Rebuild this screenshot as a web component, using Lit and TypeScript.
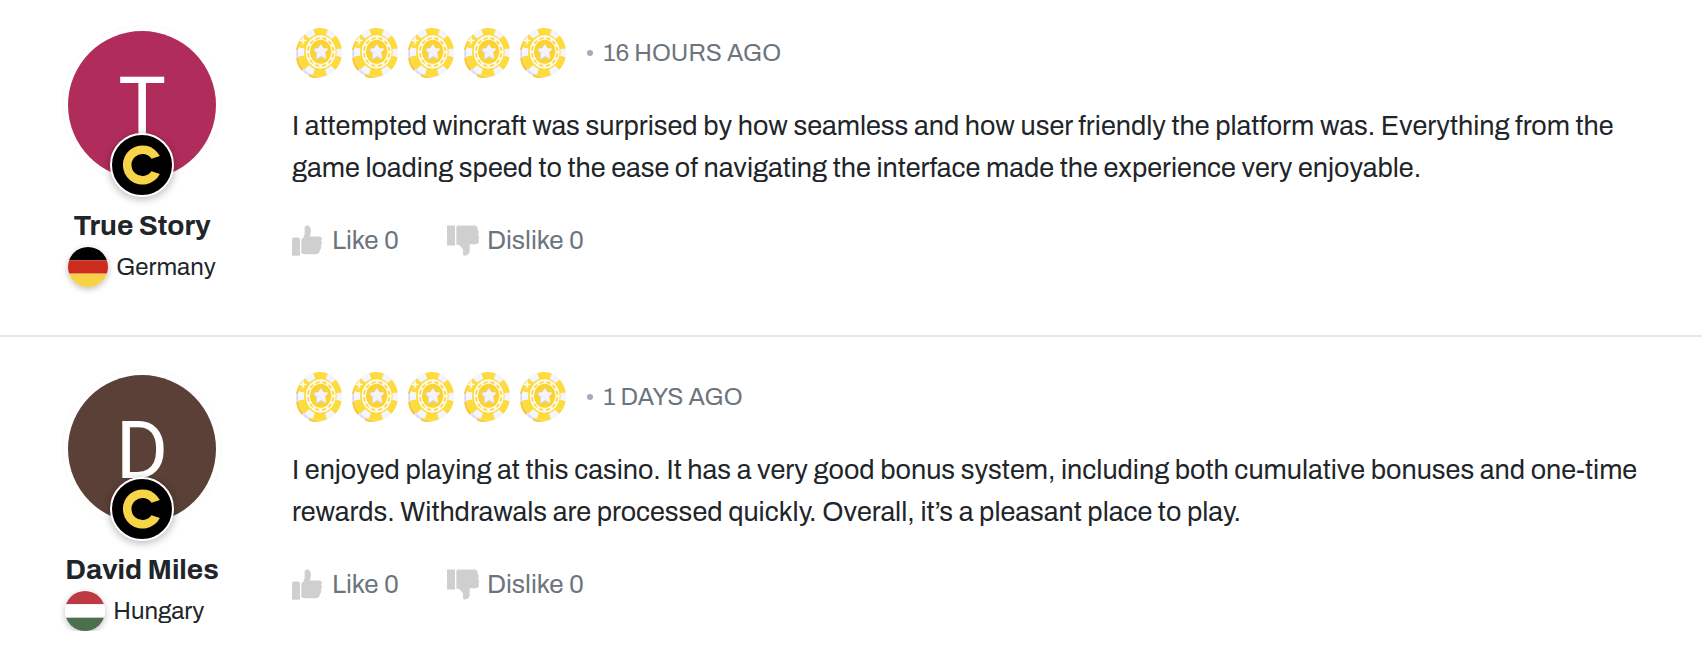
import { LitElement, html, svg, css } from "lit";
import { customElement, property } from "lit/decorators.js";

interface Review {
  name: string;
  country: "Germany" | "Hungary";
  tone: "rose" | "brown";
  rating: number;
  age: string;
  text: string;
  likes: number;
  dislikes: number;
}

const REVIEWS: Review[] = [
  {
    name: "True Story",
    country: "Germany",
    tone: "rose",
    rating: 5,
    age: "16 hours ago",
    text: "I attempted wincraft was surprised by how seamless and how user friendly the platform was. Everything from the game loading speed to the ease of navigating the interface made the experience very enjoyable.",
    likes: 0,
    dislikes: 0,
  },
  {
    name: "David Miles",
    country: "Hungary",
    tone: "brown",
    rating: 5,
    age: "1 days ago",
    text: "I enjoyed playing at this casino. It has a very good bonus system, including both cumulative bonuses and one-time rewards. Withdrawals are processed quickly. Overall, it’s a pleasant place to play.",
    likes: 0,
    dislikes: 0,
  },
];

const FLAGS = {
  Germany: ["#000000", "#cc2b1d", "#f8d147"],
  Hungary: ["#be3a42", "#ffffff", "#4e6e50"],
};

const chip = html`<svg class="chip" viewBox="0 0 138 150" aria-hidden="true">
  <ellipse cx="66" cy="77" rx="66" ry="72" fill="#dcdcfa" />
  <ellipse cx="60" cy="79" rx="51" ry="61" fill="none" stroke="#fbcb3a" stroke-width="20"
    pathLength="12" stroke-dasharray="1.2 0.8" stroke-dashoffset="-0.4" />
  <ellipse cx="72" cy="73" rx="66" ry="73" fill="#f5f5ff" />
  <ellipse cx="72" cy="73" rx="54" ry="61" fill="none" stroke="#fcdc3f" stroke-width="24"
    pathLength="12" stroke-dasharray="1.2 0.8" stroke-dashoffset="-0.4" />
  <ellipse cx="73" cy="72" rx="49" ry="54" fill="#fcd93e" />
  <ellipse cx="74" cy="72" rx="45" ry="50" fill="#fffbe8" />
  <ellipse cx="74" cy="72" rx="38" ry="42" fill="none" stroke="#fbd43c" stroke-width="5"
    pathLength="24" stroke-dasharray="1.2 0.8" stroke-dashoffset="-0.4" />
  <ellipse cx="74" cy="71" rx="32" ry="36" fill="#fcd334" />
  <path d="M72 52l6 12 15-1-9 13 4 16-14-7-13 9 2-17-11-12 14-2z" fill="#d9d9f7" stroke="#d9d9f7" stroke-width="3" stroke-linejoin="round" />
  <path d="M75 50l6 12 14 1-9 11 3 15-13-7-12 8 1-15-9-11 13-3z" fill="#f3f3ff" stroke="#f3f3ff" stroke-width="3" stroke-linejoin="round" />
  <path d="M21 23l3 11 10 3-10 4-3 11-4-11-9-4 9-3z" fill="#fffbe0" />
</svg>`;

const thumbUp = html`<svg class="thumb" viewBox="0 0 96 92" aria-hidden="true">
  <rect x="0" y="37" width="24" height="55" rx="5" />
  <path d="M28 43C34 38 38 31 38 24V8C38 1 45 -1 50 2C57 7 58 17 55 27L53 34H82C90 34 91 43 87 48C91 52 90 59 86 62C89 67 87 73 83 75C84 82 80 87 73 87H36C32 87 28 84 28 81Z" />
</svg>`;

const thumbDown = html`<svg class="thumb" viewBox="0 0 96 92" aria-hidden="true">
  <rect x="0" y="1" width="24" height="60" />
  <path d="M28 7C28 3 31 1 35 1H82C90 1 94 7 91 13C96 17 96 24 93 28C97 33 97 39 94 43C98 50 94 57 87 57H68V77C68 86 61 92 52 91C49 91 48 89 48 85V75C48 69 40 66 36 59H28Z" />
</svg>`;

@customElement("review-item")
class ReviewItem extends LitElement {
  @property({ attribute: false }) review!: Review;

  static styles = css`
    :host {
      display: grid;
      grid-template-columns: 160px minmax(0, 1fr);
      column-gap: 70px;
      padding: 0 40px 0 62px;
      color: #212529;
    }
    .author {
      display: flex;
      flex-direction: column;
      align-items: center;
    }
    .avatar {
      position: relative;
      box-sizing: border-box;
      width: 160px;
      height: 160px;
      padding: 5px;
      border: 1px solid #fafafa;
      border-radius: 50%;
    }
    .initial {
      display: flex;
      align-items: center;
      justify-content: center;
      box-sizing: border-box;
      height: 100%;
      padding-top: 4px;
      border-radius: 50%;
      color: #fff;
      font: 400 80px/1 Roboto, sans-serif;
    }
    .rose { background: #b02d5b; }
    .brown { background: #5a4037; }
    .badge {
      position: absolute;
      left: 47px;
      bottom: -13px;
      box-sizing: border-box;
      width: 64px;
      height: 64px;
      border: 2px solid #fff;
      border-radius: 50%;
      background: #000;
      box-shadow: 0 2px 8px rgba(0, 0, 0, 0.3);
    }
    .badge svg { display: block; width: 100%; height: 100%; }
    .identity { margin-top: 23px; }
    .name {
      margin: 0;
      font-size: 28px;
      font-weight: 700;
      line-height: 36px;
      text-align: center;
      white-space: nowrap;
    }
    .country {
      display: flex;
      align-items: center;
      gap: 8px;
      margin: 3px 0 0;
      font-size: 24px;
      line-height: 40px;
    }
    .flag {
      width: 40px;
      height: 40px;
      border-radius: 50%;
      box-shadow: 0 2px 6px rgba(0, 0, 0, 0.25);
    }
    .meta {
      display: flex;
      align-items: center;
      gap: 10px;
      padding: 3px 4px 0;
    }
    .chip { display: block; width: 46px; height: 50px; }
    .age {
      display: flex;
      align-items: center;
      gap: 10px;
      margin-left: 11px;
      color: #6c757d;
      font-size: 24px;
      line-height: 36px;
      text-transform: uppercase;
    }
    .dot {
      width: 6px;
      height: 6px;
      border-radius: 50%;
      background: #a2adb7;
    }
    .text {
      margin: 27px 0 0;
      font-size: 27px;
      line-height: 42px;
    }
    .votes {
      display: flex;
      gap: 48px;
      margin-top: 33px;
    }
    .vote {
      display: flex;
      align-items: center;
      gap: 8px;
      padding: 0;
      border: 0;
      background: none;
      color: #6c757d;
      font: inherit;
      font-size: 26px;
      line-height: 36px;
      cursor: pointer;
    }
    .thumb { width: 32px; height: 31px; fill: #cfcfcf; }
  `;

  render() {
    const r = this.review;
    return html`
      <div class="author">
        <div class="avatar">
          <div class="initial ${r.tone}">${r.name[0]}</div>
          <span class="badge">
            <svg viewBox="0 0 60 60" aria-hidden="true">
              <path d="M47.900 21A19.600 19.600 0 1 0 47.900 39L39.500 36.300A11 11 0 1 1 39.500 23.700Z" fill="#f8d548" />
            </svg>
          </span>
        </div>
        <div class="identity">
          <h3 class="name">${r.name}</h3>
          <p class="country">
            <svg class="flag" viewBox="0 0 3 3" aria-hidden="true">
              ${FLAGS[r.country].map((c, i) => svg`<rect y=${i} width="3" height="1" fill=${c} />`)}
            </svg>
            <span>${r.country}</span>
          </p>
        </div>
      </div>
      <div class="body">
        <div class="meta">
          ${Array.from({ length: r.rating }, () => chip)}
          <span class="age"><span class="dot"></span>${r.age}</span>
        </div>
        <p class="text">${r.text}</p>
        <div class="votes">
          <button class="vote" type="button">${thumbUp}<span>Like ${r.likes}</span></button>
          <button class="vote" type="button">${thumbDown}<span>Dislike ${r.dislikes}</span></button>
        </div>
      </div>
    `;
  }
}

@customElement("app-root")
class AppRoot extends LitElement {
  static styles = css`
    :host {
      display: block;
      padding: 25px 4px 0 0;
      background: #fff;
      font-family: Archivo, "Liberation Sans", Arial, sans-serif;
    }
    .entry + .entry {
      margin-top: 48px;
      padding-top: 32px;
      border-top: 2px solid #e6e6e6;
    }
  `;

  render() {
    return html`${REVIEWS.map(
      (r) => html`<article class="entry"><review-item .review=${r}></review-item></article>`
    )}`;
  }
}
